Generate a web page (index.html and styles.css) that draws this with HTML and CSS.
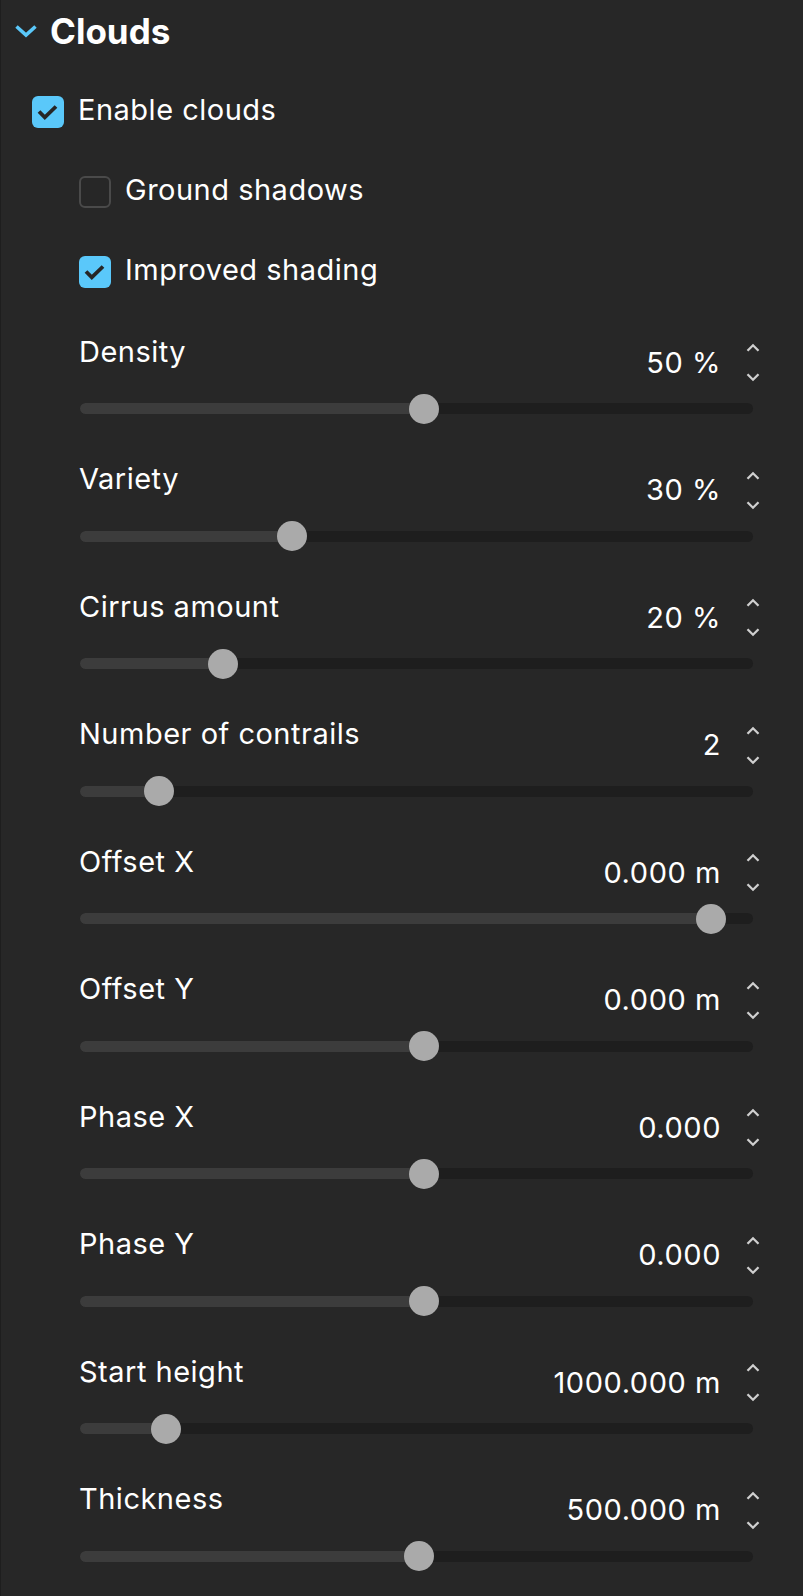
FILE: index.html
```html
<!DOCTYPE html>
<html>
<head>
<meta charset="utf-8">
<link rel="stylesheet" href="styles.css">
</head>
<body>
<div class="panel">
  <div class="header">
    <svg class="chev" width="24" height="14" viewBox="0 0 24 14"><polyline points="2.5,2.5 12,11 21.5,2.5" fill="none" stroke="#5ac8fa" stroke-width="3.6"/></svg>
    <span class="title">Clouds</span>
  </div>

  <div class="checks">
    <div class="check-row">
      <span class="box checked"><svg width="32" height="32" viewBox="0 0 32 32"><polyline points="7,15.5 12.8,21.3 24,10.5" fill="none" stroke="#262626" stroke-width="3.8"/></svg></span>
      <span class="check-label">Enable clouds</span>
    </div>
    <div class="check-row nested">
      <span class="box"></span>
      <span class="check-label">Ground shadows</span>
    </div>
    <div class="check-row nested">
      <span class="box checked"><svg width="32" height="32" viewBox="0 0 32 32"><polyline points="7,15.5 12.8,21.3 24,10.5" fill="none" stroke="#262626" stroke-width="3.8"/></svg></span>
      <span class="check-label">Improved shading</span>
    </div>
  </div>

  <div class="sliders">
    <div class="slider">
      <div class="slider-head"><span class="label">Density</span><span class="right"><span class="value">50 %</span><span class="spin"><svg width="14" height="9" viewBox="0 0 14 9"><polyline points="1.5,7.8 7,2.3 12.5,7.8" fill="none" stroke="#cfcfcf" stroke-width="2.3"/></svg><svg width="14" height="9" viewBox="0 0 14 9"><polyline points="1.5,1.2 7,6.7 12.5,1.2" fill="none" stroke="#cfcfcf" stroke-width="2.3"/></svg></span></span></div>
      <div class="track" style="--x:344px"><span class="fill"></span><span class="knob"></span></div>
    </div>
    <div class="slider">
      <div class="slider-head"><span class="label">Variety</span><span class="right"><span class="value">30 %</span><span class="spin"><svg width="14" height="9" viewBox="0 0 14 9"><polyline points="1.5,7.8 7,2.3 12.5,7.8" fill="none" stroke="#cfcfcf" stroke-width="2.3"/></svg><svg width="14" height="9" viewBox="0 0 14 9"><polyline points="1.5,1.2 7,6.7 12.5,1.2" fill="none" stroke="#cfcfcf" stroke-width="2.3"/></svg></span></span></div>
      <div class="track" style="--x:212px"><span class="fill"></span><span class="knob"></span></div>
    </div>
    <div class="slider">
      <div class="slider-head"><span class="label">Cirrus amount</span><span class="right"><span class="value">20 %</span><span class="spin"><svg width="14" height="9" viewBox="0 0 14 9"><polyline points="1.5,7.8 7,2.3 12.5,7.8" fill="none" stroke="#cfcfcf" stroke-width="2.3"/></svg><svg width="14" height="9" viewBox="0 0 14 9"><polyline points="1.5,1.2 7,6.7 12.5,1.2" fill="none" stroke="#cfcfcf" stroke-width="2.3"/></svg></span></span></div>
      <div class="track" style="--x:143px"><span class="fill"></span><span class="knob"></span></div>
    </div>
    <div class="slider">
      <div class="slider-head"><span class="label">Number of contrails</span><span class="right"><span class="value">2</span><span class="spin"><svg width="14" height="9" viewBox="0 0 14 9"><polyline points="1.5,7.8 7,2.3 12.5,7.8" fill="none" stroke="#cfcfcf" stroke-width="2.3"/></svg><svg width="14" height="9" viewBox="0 0 14 9"><polyline points="1.5,1.2 7,6.7 12.5,1.2" fill="none" stroke="#cfcfcf" stroke-width="2.3"/></svg></span></span></div>
      <div class="track" style="--x:79px"><span class="fill"></span><span class="knob"></span></div>
    </div>
    <div class="slider">
      <div class="slider-head"><span class="label">Offset X</span><span class="right"><span class="value">0.000 m</span><span class="spin"><svg width="14" height="9" viewBox="0 0 14 9"><polyline points="1.5,7.8 7,2.3 12.5,7.8" fill="none" stroke="#cfcfcf" stroke-width="2.3"/></svg><svg width="14" height="9" viewBox="0 0 14 9"><polyline points="1.5,1.2 7,6.7 12.5,1.2" fill="none" stroke="#cfcfcf" stroke-width="2.3"/></svg></span></span></div>
      <div class="track" style="--x:630.5px"><span class="fill"></span><span class="knob"></span></div>
    </div>
    <div class="slider">
      <div class="slider-head"><span class="label">Offset Y</span><span class="right"><span class="value">0.000 m</span><span class="spin"><svg width="14" height="9" viewBox="0 0 14 9"><polyline points="1.5,7.8 7,2.3 12.5,7.8" fill="none" stroke="#cfcfcf" stroke-width="2.3"/></svg><svg width="14" height="9" viewBox="0 0 14 9"><polyline points="1.5,1.2 7,6.7 12.5,1.2" fill="none" stroke="#cfcfcf" stroke-width="2.3"/></svg></span></span></div>
      <div class="track" style="--x:343.5px"><span class="fill"></span><span class="knob"></span></div>
    </div>
    <div class="slider">
      <div class="slider-head"><span class="label">Phase X</span><span class="right"><span class="value">0.000</span><span class="spin"><svg width="14" height="9" viewBox="0 0 14 9"><polyline points="1.5,7.8 7,2.3 12.5,7.8" fill="none" stroke="#cfcfcf" stroke-width="2.3"/></svg><svg width="14" height="9" viewBox="0 0 14 9"><polyline points="1.5,1.2 7,6.7 12.5,1.2" fill="none" stroke="#cfcfcf" stroke-width="2.3"/></svg></span></span></div>
      <div class="track" style="--x:344px"><span class="fill"></span><span class="knob"></span></div>
    </div>
    <div class="slider">
      <div class="slider-head"><span class="label">Phase Y</span><span class="right"><span class="value">0.000</span><span class="spin"><svg width="14" height="9" viewBox="0 0 14 9"><polyline points="1.5,7.8 7,2.3 12.5,7.8" fill="none" stroke="#cfcfcf" stroke-width="2.3"/></svg><svg width="14" height="9" viewBox="0 0 14 9"><polyline points="1.5,1.2 7,6.7 12.5,1.2" fill="none" stroke="#cfcfcf" stroke-width="2.3"/></svg></span></span></div>
      <div class="track" style="--x:343.5px"><span class="fill"></span><span class="knob"></span></div>
    </div>
    <div class="slider">
      <div class="slider-head"><span class="label">Start height</span><span class="right"><span class="value">1000.000 m</span><span class="spin"><svg width="14" height="9" viewBox="0 0 14 9"><polyline points="1.5,7.8 7,2.3 12.5,7.8" fill="none" stroke="#cfcfcf" stroke-width="2.3"/></svg><svg width="14" height="9" viewBox="0 0 14 9"><polyline points="1.5,1.2 7,6.7 12.5,1.2" fill="none" stroke="#cfcfcf" stroke-width="2.3"/></svg></span></span></div>
      <div class="track" style="--x:86px"><span class="fill"></span><span class="knob"></span></div>
    </div>
    <div class="slider">
      <div class="slider-head"><span class="label">Thickness</span><span class="right"><span class="value">500.000 m</span><span class="spin"><svg width="14" height="9" viewBox="0 0 14 9"><polyline points="1.5,7.8 7,2.3 12.5,7.8" fill="none" stroke="#cfcfcf" stroke-width="2.3"/></svg><svg width="14" height="9" viewBox="0 0 14 9"><polyline points="1.5,1.2 7,6.7 12.5,1.2" fill="none" stroke="#cfcfcf" stroke-width="2.3"/></svg></span></span></div>
      <div class="track" style="--x:338.5px"><span class="fill"></span><span class="knob"></span></div>
    </div>
  </div>
</div>
</body>
</html>
```

FILE: styles.css
```css
html, body {
  margin: 0;
  padding: 0;
  background: #272727;
}

body {
  font-family: Inter, "Noto Sans", sans-serif;
  color: #ffffff;
}

.panel {
  min-height: 1596px;
  box-sizing: border-box;
  border-left: 1px solid #1e1e1e;
  padding-top: 7px;
}

.header {
  display: flex;
  align-items: center;
  height: 48px;
  padding-left: 13px;
  gap: 12px;
}

.chev {
  display: block;
}

.title {
  font-size: 35px;
  font-weight: 700;
  line-height: 48px;
}

.checks {
  display: flex;
  flex-direction: column;
  gap: 48px;
  margin-top: 41px;
  padding-left: 31px;
}

.check-row {
  display: flex;
  align-items: flex-start;
  gap: 14px;
  height: 32px;
}

.check-row.nested {
  padding-left: 47px;
}

.box {
  width: 32px;
  height: 32px;
  box-sizing: border-box;
  border-radius: 6px;
  border: 2px solid #4a4a4a;
  flex: none;
}

.box.checked {
  border: none;
  background: #5ac8fa;
}

.box svg {
  display: block;
}

.check-label {
  font-size: 29px;
  line-height: 28px;
  letter-spacing: 0.5px;
}

.sliders {
  display: flex;
  flex-direction: column;
  gap: 39.5px;
  margin-top: 47.5px;
  padding: 0 43px 0 78px;
}

.slider-head {
  display: flex;
  justify-content: space-between;
  align-items: flex-start;
  height: 48px;
}

.label {
  font-size: 29px;
  line-height: 32px;
  letter-spacing: 0.5px;
}

.right {
  display: flex;
  align-items: flex-start;
  gap: 25px;
}

.value {
  font-size: 29px;
  line-height: 32px;
  margin-top: 11px;
  letter-spacing: 0.55px;
}

.spin {
  display: flex;
  flex-direction: column;
  gap: 21px;
  padding-top: 7.5px;
}

.spin svg {
  display: block;
}

.track {
  position: relative;
  height: 30px;
  margin: 10px 7px 0 1px;
}

.track::before {
  content: "";
  position: absolute;
  left: 0;
  right: 0;
  top: 9.5px;
  height: 11px;
  border-radius: 6px;
  background: #1e1e1e;
}

.fill {
  position: absolute;
  left: 0;
  top: 9.5px;
  height: 11px;
  width: var(--x);
  border-radius: 6px 0 0 6px;
  background: #3c3c3c;
}

.knob {
  position: absolute;
  top: 0;
  left: calc(var(--x) - 15px);
  width: 30px;
  height: 30px;
  border-radius: 50%;
  background: #aaaaaa;
}
```
